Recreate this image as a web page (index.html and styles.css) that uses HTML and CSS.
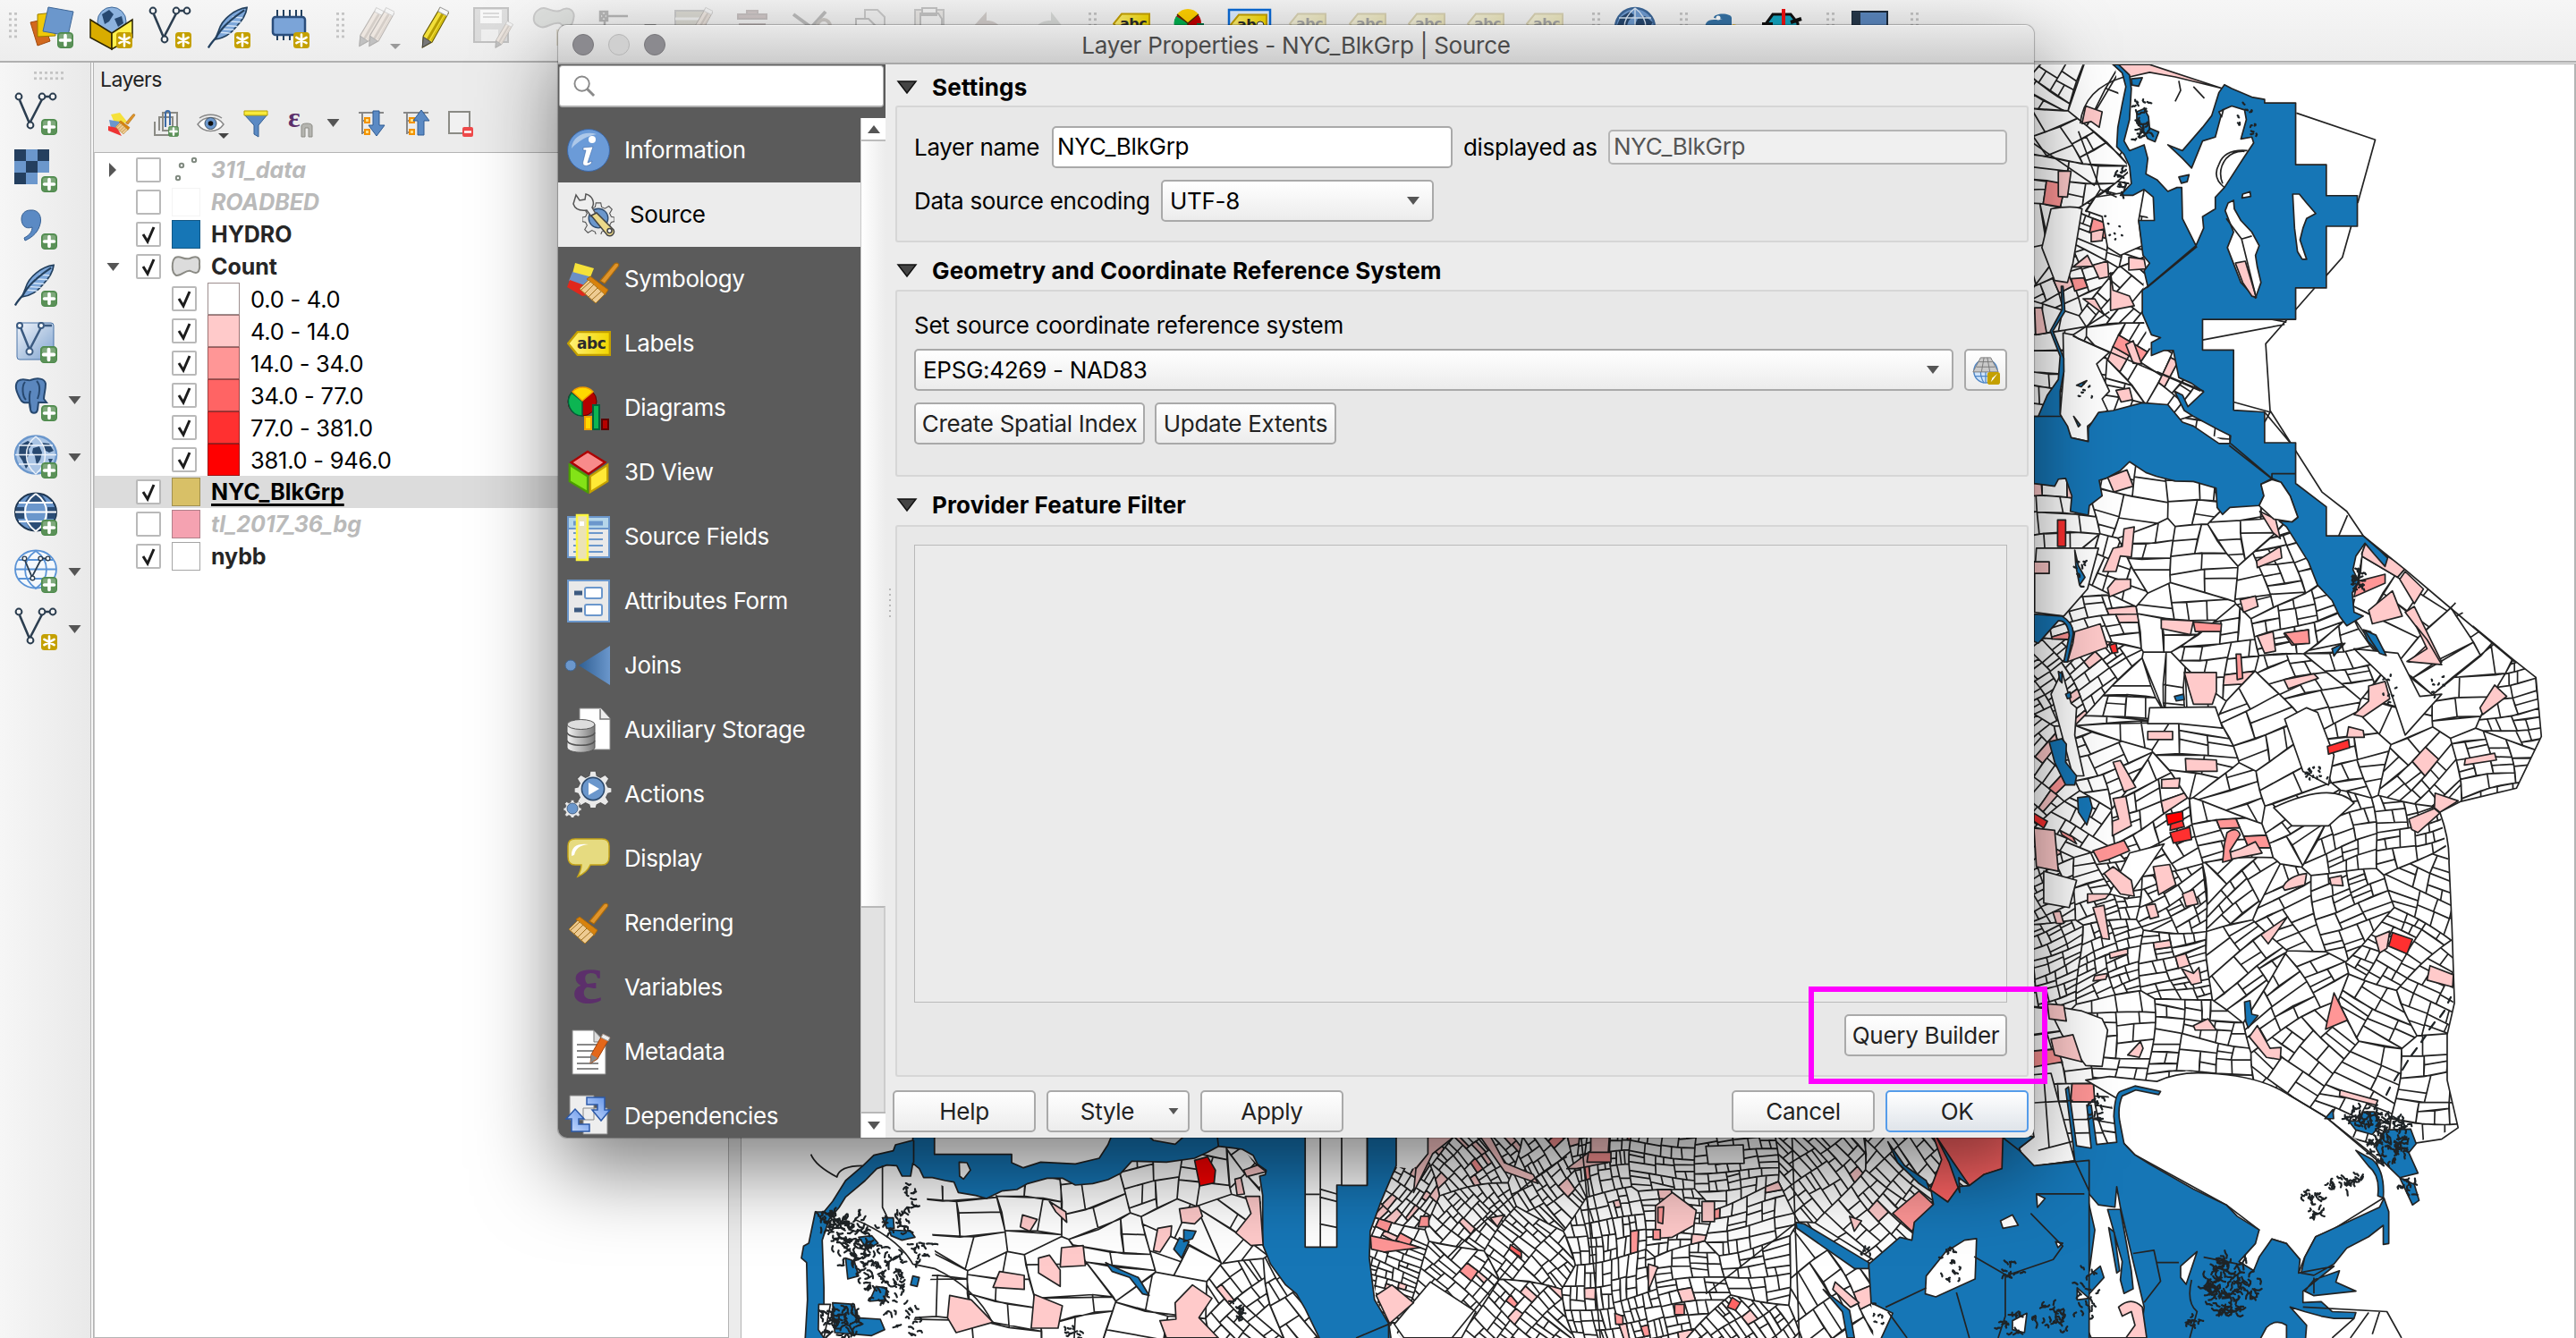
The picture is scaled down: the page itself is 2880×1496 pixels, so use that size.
FILE: index.html
```html
<!DOCTYPE html>
<html lang="en">
<head>
<meta charset="utf-8">
<title>Layer Properties - NYC_BlkGrp | Source</title>
<link rel="stylesheet" href="styles.css">
</head>
<body>
<svg class="defs" width="0" height="0" aria-hidden="true">
  <defs>
    <linearGradient id="gBlue" x1="0" x2="1"><stop offset="0" stop-color="#2f5f93"/><stop offset="1" stop-color="#6b97cc"/></linearGradient>
    <linearGradient id="gMesh" x1="0" y1="0" x2="1" y2="1"><stop offset="0" stop-color="#f0f4fa"/><stop offset="1" stop-color="#7fa3cf"/></linearGradient>
    <linearGradient id="gGrey" x1="0" x2="1"><stop offset="0" stop-color="#f4f4f4"/><stop offset="1" stop-color="#7a7a7a"/></linearGradient>
    <linearGradient id="gYel" x1="0" x2="1"><stop offset="0" stop-color="#fff27a"/><stop offset="1" stop-color="#f2d600"/></linearGradient>
    <linearGradient id="gArr" x1="0" x2="1" y1="1" y2="0"><stop offset="0" stop-color="#cfe0ff"/><stop offset="1" stop-color="#5b8ee6"/></linearGradient>
    <symbol id="plus" viewBox="0 0 18 18"><rect x=".5" y=".5" width="17" height="17" rx="3.5" fill="#5b9158" stroke="#4c8a4b"/><rect x="2" y="2" width="14" height="6" rx="2" fill="#fff" opacity=".22"/><path d="M9 3.5v11M3.500 9h11" stroke="#fff" stroke-width="3.600" stroke-linecap="round"/></symbol>
    <symbol id="star" viewBox="0 0 18 18"><rect width="18" height="18" rx="3.500" fill="#c4a000"/><path d="M9 2.500v13M3.400 5.800l11.200 6.400M14.600 5.800L3.400 12.200" stroke="#fff" stroke-width="2.600" stroke-linecap="round"/></symbol>
    <symbol id="vee" viewBox="0 0 48 48"><path d="M6 9L17 35 31 8M34 5h7" fill="none" stroke="#2c3e50" stroke-width="2.600"/><g fill="#f4f4f4" stroke="#2c3e50" stroke-width="2"><circle cx="5" cy="5" r="3.400"/><circle cx="18" cy="37" r="3.400"/><circle cx="31" cy="5" r="3.400"/><circle cx="43" cy="5" r="3.400"/></g></symbol>
    <symbol id="feather" viewBox="0 0 48 48"><path d="M46 1C32 3 17 14 13 28L9 38C17 37 26 33 33 24 40 17 45 10 46 1z" fill="#7da7da" stroke="#24415f" stroke-width="1.800"/><path d="M15 30l12 1M18 26l13 1M20 22l15 1M24 17l15 1M29 12l12 1" stroke="#d4e4f6" stroke-width="1.500"/><path d="M43 4C28 14 15 26 10 36 5 42 3 44 1 48" fill="none" stroke="#24415f" stroke-width="2.400"/></symbol>
    <symbol id="pencil" viewBox="0 0 32 48"><path d="M22 2l10 5-19 34-11 6 1-13z" fill="#f2df3a" stroke="#6b5c00" stroke-width="1.200"/><path d="M25 9L8 38" stroke="#b69d00" stroke-width="3"/><path d="M28 11L12 39" stroke="#d3bd10" stroke-width="2"/><path d="M22 1l10 5-2 5-10-5z" fill="#f6f6f6" stroke="#999"/><path d="M3 35l9 6-10 6z" fill="#777" stroke="#444"/></symbol>
    <symbol id="tag" viewBox="0 0 42 24"><path d="M10 1h31v22H10L1 12z" fill="url(#gYel)" stroke="#c4a000" stroke-width="2"/></symbol>
    <symbol id="globe" viewBox="0 0 48 48"><circle cx="24" cy="24" r="22" fill="#6f9bd0" stroke="#3d6798" stroke-width="2.500"/><path d="M8 12l10-6 5 4-6 6-3 8 5 5-2 10-6-6-3-9-4-3zM27 14l8-3 9 7-3 4-5 6-3 12-5-3-1-9-5-4z" fill="#27486f"/><path d="M2 24h44M6 13h36M6 35h36M24 2v44M24 2C8 14 8 34 24 46 40 34 40 14 24 2" fill="none" stroke="#d8e6f5" stroke-width="1.400"/></symbol>
    <symbol id="brush" viewBox="0 0 48 48"><path d="M25 22L41 3c3-2 6 0 4 3L30 25z" fill="#e0942a" stroke="#a8690c" stroke-width="1.200"/><path d="M14 17l20 15-4 6L10 20z" fill="#d8820d" stroke="#a8690c"/><path d="M12 21l18 16-10 10L2 31z" fill="#eecb92" stroke="#b07a1e"/><path d="M14 23L4 32M18 26L8 36M22 30L12 40M26 34L16 43" stroke="#a06f1c"/></symbol>
    <symbol id="gear" viewBox="0 0 40 40"><path d="M17 1h6l1 5 4 2 5-3 4 4-3 5 2 4 4 1v5l-4 1-2 4 3 5-4 4-5-3-4 2-1 4h-6l-1-4-4-2-5 3-4-4 3-5-2-4-4-1v-5l4-1 2-4-3-5 4-4 5 3 4-2z" fill="#e9e9e9" stroke="#555" stroke-width="1.200"/><circle cx="20" cy="20" r="12" fill="#6b97cc" stroke="#2d4a6d" stroke-width="1.500"/></symbol>
    <symbol id="down" viewBox="0 0 14 9"><path d="M0 0h14L7 9z" fill="#555"/></symbol>
    <symbol id="tick" viewBox="0 0 28 28"><path d="M8 14l5 8 7-16" fill="none" stroke="#1c1c1c" stroke-width="3"/></symbol>
  </defs>
</svg>

<div class="app">
  <header class="toolbar">
    <span class="grip grip-first"></span>
    <span class="slot"><svg viewBox="0 0 48 48"><path d="M0 18l14-3 8 24-14 5z" fill="#d2691e" stroke="#a14a0e"/><path d="M8 9l18-2 2 26-20 1z" fill="#f0c808" stroke="#9a7f00"/><path d="M20 1l28 5-6 27-28-5z" fill="#6b97cc" stroke="#3f6797"/><use href="#plus" x="30" y="29" width="18" height="18"/></svg></span>
    <span class="slot"><svg viewBox="0 0 48 48"><circle cx="25" cy="17" r="16" fill="#8db3de" stroke="#3d6798"/><path d="M14 9l8-5 5 5-5 8-5 3zM28 14l8-3 2 8-6 4z" fill="#27486f"/><path d="M1 15l24 15v18L1 35z" fill="#d9ac00" stroke="#2b2400" stroke-width="1.500"/><path d="M48 15L25 30v18l23-13z" fill="#fff04d" stroke="#2b2400" stroke-width="1.500"/><use href="#star" x="30" y="29" width="18" height="18"/></svg></span>
    <span class="slot"><svg viewBox="0 0 48 48"><use href="#vee" width="48" height="48"/><use href="#star" x="30" y="29" width="18" height="18"/></svg></span>
    <span class="slot"><svg viewBox="0 0 48 48"><use href="#feather" width="46" height="47"/><use href="#star" x="30" y="29" width="18" height="18"/></svg></span>
    <span class="slot"><svg viewBox="0 0 48 48"><path d="M12 4v34M19 4v34M26 4v34M33 4v34M39 4v34" stroke="#24415f" stroke-width="2"/><rect x="7" y="12" width="36" height="20" rx="3" fill="#7ba4d8" stroke="#2a4d7b" stroke-width="2.500"/><use href="#star" x="30" y="29" width="18" height="18"/></svg></span>
    <span class="grip grip-a"></span>
    <span class="slot slot-62 off"><svg viewBox="0 0 48 48"><g class="sepia"><use href="#pencil" width="30" height="46"/><use href="#pencil" x="11" width="30" height="46"/></g><path d="M36 42h12l-6 6z" fill="#111"/></svg></span>
    <span class="slot"><svg viewBox="0 0 48 48"><use href="#pencil" x="8" width="32" height="47"/></svg></span>
    <span class="slot off"><svg viewBox="0 0 48 48"><path d="M2 2h38v38H2z" fill="#bbb" stroke="#777" stroke-width="2"/><path d="M9 4h24v15H9z" fill="#fff"/><path d="M12 8h18M12 12h18" stroke="#999" stroke-width="1.500"/><path d="M10 26h19v13H10z" fill="#eee"/><use class="sepia" href="#pencil" x="24" y="16" width="22" height="31"/></svg></span>
    <span class="slot off"><svg viewBox="0 0 48 48"><path d="M8 4C16-2 22 8 32 5c10-6 18 0 15 10-2 10-9 9-15 4C22 17 16 27 8 22 0 18 2 8 8 4z" fill="#b9c4b9" stroke="#888" stroke-width="2"/><rect x="28" y="26" width="18" height="18" fill="#c9b77c"/></svg></span>
    <span class="slot slot-91 off"><svg viewBox="0 0 80 48"><path d="M3 6h8v10H3zM3 6l8 10M11 6l-8 10M12 11h22M8 17v14M14 38L30 24l6 6" fill="none" stroke="#555" stroke-width="2.500"/><path d="M52 20h14l-7 7z" fill="#000"/></svg></span>
    <span class="slot off"><svg viewBox="0 0 48 48"><path d="M4 5h34v30H4z" fill="#b9b38f" stroke="#888" stroke-width="2"/><path d="M4 14h34M4 24h34" stroke="#eee" stroke-width="3"/><use class="sepia" href="#pencil" x="20" width="26" height="40"/></svg></span>
    <span class="slot off"><svg viewBox="0 0 48 48"><path d="M8 9h32v5H8zM18 9V5h12v4M10 20h28l-2 26H12z" fill="#b08080" stroke="#8d6b6b" stroke-width="2"/></svg></span>
    <span class="slot off"><svg viewBox="0 0 48 48"><path d="M4 9l26 19M40 6L22 26" stroke="#666" stroke-width="4"/><circle cx="38" cy="22" r="7" fill="none" stroke="#987" stroke-width="4"/></svg></span>
    <span class="slot off"><svg viewBox="0 0 48 48"><path d="M18 4h14l8 8v26H18z" fill="#eee" stroke="#888" stroke-width="2"/><path d="M8 14h14l8 8v24H8z" fill="#fafafa" stroke="#777" stroke-width="2"/></svg></span>
    <span class="slot off"><svg viewBox="0 0 48 48"><path d="M8 4h32v40H8z" fill="#ddd7ca" stroke="#888" stroke-width="2"/><path d="M14 8h20l4 6v26H14zM16 2h16v8H16z" fill="#f6f6f6" stroke="#777" stroke-width="2"/></svg></span>
    <span class="slot off"><svg viewBox="0 0 48 48"><path d="M6 24L22 6v10c14 0 18 10 18 22-5-8-10-10-18-9v8z" fill="#a99286"/></svg></span>
    <span class="slot off"><svg viewBox="0 0 48 48"><path d="M42 24L28 6v10C12 16 8 26 8 38c5-8 10-10 20-9v8z" fill="#aab4aa"/></svg></span>
    <span class="grip grip-b"></span>
    <span class="slot"><svg viewBox="0 0 48 48"><use href="#tag" x="3" y="7" width="42" height="25"/><text class="abc" x="11" y="25">abc</text></svg></span>
    <span class="slot"><svg viewBox="0 0 48 48"><circle cx="21" cy="19" r="15" fill="#c00000"/><path d="M21 19L8 11A15 15 0 0 0 21 34z" fill="#00b050"/><path d="M21 19L9 9a15 15 0 0 1 24 0z" fill="#ffd000"/><path d="M21 34V19L9 9M21 19L33 9" stroke="#4b3000" stroke-width="1.500" fill="none"/><path d="M31 19h8v20h-8z" fill="#00784a"/></svg></span>
    <span class="slot"><svg viewBox="0 0 48 48"><path d="M1 4h46v44H1z" fill="#dcecff" stroke="#0a6ad6" stroke-width="2.500"/><use href="#tag" x="2" y="8" width="42" height="25"/><text class="abc" x="10" y="26">ab</text><circle cx="36" cy="21" r="4" fill="#fff" stroke="#333"/></svg></span>
    <span class="slot off"><svg viewBox="0 0 48 48"><use href="#tag" x="2" y="7" width="42" height="25"/><text class="abc" x="10" y="25">abc</text></svg></span>
    <span class="slot off"><svg viewBox="0 0 48 48"><use href="#tag" x="3" y="7" width="42" height="25"/><text class="abc" x="11" y="25">abc</text></svg></span>
    <span class="slot off"><svg viewBox="0 0 48 48"><use href="#tag" x="3" y="7" width="42" height="25"/><text class="abc" x="11" y="25">abc</text></svg></span>
    <span class="slot off"><svg viewBox="0 0 48 48"><use href="#tag" x="3" y="7" width="42" height="25"/><text class="abc" x="11" y="25">abc</text></svg></span>
    <span class="slot off"><svg viewBox="0 0 48 48"><use href="#tag" x="3" y="7" width="42" height="25"/><text class="abc" x="11" y="25">abc</text></svg></span>
    <span class="grip grip-c"></span>
    <span class="slot"><svg viewBox="0 0 48 48"><use href="#globe" width="48" height="48"/></svg></span>
    <span class="grip grip-d"></span>
    <span class="slot"><svg viewBox="0 0 48 48"><path d="M14 13c0-6 20-6 20 0v14H4c0-8 2-12 10-12h10" fill="#3572a5"/><path d="M35 20c8 0 9 8 8 14H24v-6h11z" fill="#ffd43b"/><circle cx="19" cy="13" r="2.500" fill="#fff"/></svg></span>
    <span class="slot slot-70"><svg viewBox="0 0 48 48"><path d="M6 20L14 9h20l8 10v14H8z" fill="#13a5c0" stroke="#111" stroke-width="3"/><path d="M16 22h20v12H16z" fill="#f4ee22" stroke="#111" stroke-width="2"/><path d="M2 20h12M34 18l12-4" stroke="#111" stroke-width="4"/><path d="M26 3v30" stroke="#e11" stroke-width="4"/></svg></span>
    <span class="grip grip-b"></span>
    <span class="slot"><svg viewBox="0 0 48 48"><path d="M5 6h39v42H5z" fill="#5b87be" stroke="#1c2a3a" stroke-width="2"/><path d="M5 6h9v42H5z" fill="#26384b"/><text class="help-q" x="22" y="40">?</text></svg></span>
    <span class="grip grip-b"></span>
  </header>

  <main class="workspace">
    <nav class="rail">
      <span class="rail-grip"></span>
      <span class="tool"><svg viewBox="0 0 48 48"><use href="#vee" width="48" height="48"/><use href="#plus" x="30" y="30" width="18" height="18"/></svg></span>
      <span class="tool"><svg viewBox="0 0 48 48"><path d="M0 0h39v39H0z" fill="#6b97cc"/><path d="M0 0h13v13H0zM26 0h13v13H26zM13 13h13v13H13zM0 26h13v13H0z" fill="#243f5f"/><path d="M26 26h13v13H26z" fill="#f0f0f0"/><use href="#plus" x="30" y="30" width="18" height="18"/></svg></span>
      <span class="tool"><svg viewBox="0 0 48 48"><path d="M18 4c9-1 13 7 11 15-2 9-8 15-17 19l-1-3c6-3 9-7 9-12C12 26 8 20 8 14 8 8 12 4 18 4z" fill="#5b8ac4" stroke="#355f93"/><use href="#plus" x="30" y="30" width="18" height="18"/></svg></span>
      <span class="tool"><svg viewBox="0 0 48 48"><use href="#feather" width="46" height="47"/><use href="#plus" x="30" y="30" width="18" height="18"/></svg></span>
      <span class="tool"><svg viewBox="0 0 48 48"><rect x="3" y="2" width="41" height="41" rx="3" fill="url(#gMesh)" stroke="#4a74a8"/><path d="M7 7l10 25L30 7M34 5h8" fill="none" stroke="#3b5a80" stroke-width="2.500"/><g fill="#fff" stroke="#3b5a80" stroke-width="2"><circle cx="6" cy="5" r="3"/><circle cx="17" cy="34" r="3.500"/><circle cx="30" cy="5" r="3"/></g><use href="#plus" x="29" y="28" width="19" height="19"/></svg></span>
      <span class="tool"><svg viewBox="0 0 48 48"><path d="M4 3C10-1 14 3 18 2 26-1 34 0 35 6c0 8-2 12-2 17l3 4-9 0-1 8c-1 5-7 5-8 0l-1-8c-6 1-9 0-11-5C2 14 0 8 4 3z" fill="#5b87be" stroke="#27486f" stroke-width="2"/><path d="M12 4c-4 5-3 16 1 20M25 3c5 5 3 15 1 20M18 14c-2 6-1 14 0 20" fill="none" stroke="#27486f" stroke-width="2"/><use href="#plus" x="30" y="30" width="18" height="18"/></svg><svg class="more"><use href="#down"/></svg></span>
      <span class="tool"><svg viewBox="0 0 48 48"><ellipse cx="24" cy="21.500" rx="23" ry="21" fill="#a9c4e4" stroke="#6b97cc" stroke-width="2.500"/><path d="M6 11l9-5 6 3-5 6 1 6-3 4 2 8-3 4-4-9-4-6zM21 14l7-2 3 7-2 8-4 6-2-10-3-4zM31 8l8 1 5 8-5 2-6-3zM38 26l5 0-3 6z" fill="#27486f"/><path d="M1 21.500h46M5 11h38M5 32h38M24 1C10 12 10 31 24 43 38 31 38 12 24 1" fill="none" stroke="#eef4fb" stroke-width="1.500"/><use href="#plus" x="30" y="30" width="18" height="18"/></svg><svg class="more"><use href="#down"/></svg></span>
      <span class="tool"><svg viewBox="0 0 48 48"><ellipse cx="24" cy="21.500" rx="23" ry="21" fill="#6b97cc" stroke="#1f3650" stroke-width="2"/><path d="M17 2h14l5 8H12zM2 16h9v13H2zM37 16h9v13h-9zM12 31h24l-6 10H18z" fill="#2b4d76"/><path d="M13 13h22v17H13z" fill="#6b97cc"/><path d="M1 21.500h46M5 11h38M5 32h38M24 1C8 12 8 31 24 43 40 31 40 12 24 1" fill="none" stroke="#fff" stroke-width="2"/><use href="#plus" x="30" y="30" width="18" height="18"/></svg></span>
      <span class="tool"><svg viewBox="0 0 48 48"><g fill="none" stroke="#5a93d6" stroke-width="1.800"><ellipse cx="24" cy="21.500" rx="23" ry="21" fill="#f4f8fc"/><path d="M1 21.500h46M5 11h38M5 32h38M24 1C8 12 8 31 24 43 40 31 40 12 24 1"/></g><svg x="8" y="6" width="33" height="33"><use href="#vee" width="33" height="33"/></svg><use href="#plus" x="30" y="30" width="18" height="18"/></svg><svg class="more"><use href="#down"/></svg></span>
      <span class="tool"><svg viewBox="0 0 48 48"><use href="#vee" width="48" height="48"/><use href="#star" x="30" y="30" width="18" height="18"/></svg><svg class="more"><use href="#down"/></svg></span>
    </nav>

    <section class="layers">
      <h2 class="layers-title">Layers</h2>
      <div class="layers-tools">
        <svg viewBox="0 0 32 32"><path d="M4 6l10-2 8 10-12 6z" fill="#f5e13a"/><path d="M2 12l12 2 4 8-14 0z" fill="#6b97cc"/><path d="M1 19l10 2 5 9-15-6z" fill="#e33"/><use href="#brush" x="8" y="4" width="24" height="25"/></svg>
        <svg viewBox="0 0 32 32"><path d="M12 4h16v20H12zM8 24V9h15v15M3 14v15h18" fill="none" stroke="#8b8b85" stroke-width="2"/><path d="M15 20V5c0-4 5-4 5 0v13" fill="none" stroke="#3b6aa5" stroke-width="2"/><use href="#plus" x="18" y="19" width="12" height="12"/></svg>
        <svg viewBox="0 0 32 32"><path d="M1 17C8 7 23 7 30 17 23 27 8 27 1 17z" fill="#fff" stroke="#888" stroke-width="1.500"/><path d="M3 10C10 5 21 5 28 10" fill="none" stroke="#888" stroke-width="1.500"/><circle cx="15.500" cy="16" r="6.500" fill="#6b97cc" stroke="#456"/><circle cx="15.500" cy="16" r="2.800" fill="#111"/><path d="M24 27h12l-6 6z" fill="#444"/></svg>
        <svg viewBox="0 0 32 32"><path d="M3 6h26L19 18v13l-5-3V18z" fill="#5b8ac4" stroke="#355f93"/><path d="M3 2h26v5H3z" fill="#f8ea3c" stroke="#b7a200"/></svg>
        <svg viewBox="0 0 32 32"><text class="eps" x="2" y="20">ε</text><path d="M17 31V19q0-3 6-3t6 3v12h-4V21h-4v10z" fill="#b5b5b0" stroke="#8b8b85"/></svg>
        <svg class="mini" viewBox="0 0 14 9"><use href="#down"/></svg>
        <svg viewBox="0 0 32 32"><path d="M2 4h28M6 4v24M6 13h8M6 26h8" stroke="#888" stroke-width="2" fill="none"/><path d="M9 10h5v5H9zM9 23h5v5H9z" fill="#ffe08a" stroke="#f39200" stroke-width="2"/><path d="M18 2h7v16h6l-9 12-9-12h5z" fill="#5b8ac4" stroke="#2f5b93"/></svg>
        <svg viewBox="0 0 32 32"><path d="M2 4h28M6 4v24M6 13h8M6 26h8" stroke="#888" stroke-width="2" fill="none"/><path d="M9 10h5v5H9zM9 23h5v5H9z" fill="#ffe08a" stroke="#f39200" stroke-width="2"/><path d="M18 29h7V13h6L22 1l-9 12h5z" fill="#5b8ac4" stroke="#2f5b93"/></svg>
        <svg viewBox="0 0 32 32"><path d="M3 3h23v24H3z" fill="#f1f1f1" stroke="#8b8b85" stroke-width="2"/><rect x="18" y="20" width="12" height="11" rx="2" fill="#ef4a4a"/><path d="M20 25.500h8" stroke="#fff" stroke-width="2.500"/></svg>
      </div>
      <ul class="tree">
        <li class="row"><span class="fold"><svg width="8" height="16" viewBox="0 0 8 16"><path d="M0 0l8 8-8 8z" fill="#555"/></svg></span><span class="box"></span><span class="swatch"><svg viewBox="0 0 32 32"><g fill="#fff" stroke="#808a80" stroke-width="2"><circle cx="25" cy="5" r="2.200"/><circle cx="11" cy="11" r="2.200"/><circle cx="7" cy="25" r="2.200"/></g></svg></span><span class="name dim">311_data</span></li>
        <li class="row"><span class="fold"></span><span class="box"></span><span class="swatch sw-road"></span><span class="name dim">ROADBED</span></li>
        <li class="row"><span class="fold"></span><span class="box"><svg><use href="#tick"/></svg></span><span class="swatch sw-hydro"></span><span class="name">HYDRO</span></li>
        <li class="row"><span class="fold open"><svg width="15" height="9"><use href="#down"/></svg></span><span class="box"><svg><use href="#tick"/></svg></span><span class="swatch"><svg viewBox="0 0 32 32"><path d="M4 6c6-3 9 3 16 1 8-4 12-1 11 6 1 10-3 12-10 8-5-2-10 6-16 5C-1 23 0 9 4 6z" fill="#dcdcdc" stroke="#8b8b85" stroke-width="2"/></svg></span><span class="name">Count</span></li>
        <li class="row class"><span class="box"><svg><use href="#tick"/></svg></span><span class="ramp r0"></span><span class="label">0.0 - 4.0</span></li>
        <li class="row class"><span class="box"><svg><use href="#tick"/></svg></span><span class="ramp r1"></span><span class="label">4.0 - 14.0</span></li>
        <li class="row class"><span class="box"><svg><use href="#tick"/></svg></span><span class="ramp r2"></span><span class="label">14.0 - 34.0</span></li>
        <li class="row class"><span class="box"><svg><use href="#tick"/></svg></span><span class="ramp r3"></span><span class="label">34.0 - 77.0</span></li>
        <li class="row class"><span class="box"><svg><use href="#tick"/></svg></span><span class="ramp r4"></span><span class="label">77.0 - 381.0</span></li>
        <li class="row class"><span class="box"><svg><use href="#tick"/></svg></span><span class="ramp r5"></span><span class="label">381.0 - 946.0</span></li>
        <li class="row current"><span class="fold"></span><span class="box"><svg><use href="#tick"/></svg></span><span class="swatch sw-blk"></span><span class="name">NYC_BlkGrp</span></li>
        <li class="row"><span class="fold"></span><span class="box"></span><span class="swatch sw-bg"></span><span class="name dim">tl_2017_36_bg</span></li>
        <li class="row"><span class="fold"></span><span class="box"><svg><use href="#tick"/></svg></span><span class="swatch sw-nybb"></span><span class="name">nybb</span></li>
      </ul>
    </section>

    <section class="canvas">
      <svg class="map" viewBox="829 72 2049 1424" preserveAspectRatio="none">
        <defs>
          <clipPath id="land">
            <path transform="translate(2240 60) scale(.4082 .4337)" d="M60 28H305L345 340 400 430 385 560 380 670 400 760 465 765 548 872 500 910 622 985 620 1005 490 950 380 900 232 1000 83 940V1100L345 1052 582 1110 600 1188 713 1150 806 1195 960 1440 985 1243 1100 1330 1210 1418 1400 1568 1400 1700H60z"/>
            <path transform="translate(2240 700) scale(.4082 .5076)" d="M60-60H1230L1285 0 1395 73 1458 113 1473 243 1405 357 1250 387 1195 410 1220 520 1228 660 1232 830 1215 900 1215 1000 1245 1105 1120 1140 1040 1170 780 1032 640 995 500 980 420 1003 270 992 330 1140 195 1178 85 1190 45 1150 60 1100z"/>
            <path transform="translate(800 1240) scale(.4847 .3333)" d="M480 230L560 280 625 300 720 250 800 232 830 255 905 237 960 175 1040 178 1105 165 1160 125 1215 135 1250 185 1270 205 1255 225 1262 455 1280 520 1340 620 1395 768H440L510 520z"/>
            <path transform="translate(1500 1060) scale(.5357 .3333)" d="M180 600V690L150 740 112 735 95 775 60 960 55 1040 75 1190 98 1262 125 1308H1110L1100 1060 1190 980 1235 860 1265 852 1378 740 1380 600z"/>
          </clipPath>
        </defs>
        <g id="blocks" class="line" clip-path="url(#land)"></g>
        <g class="line" transform="translate(2240 60) scale(.4082 .4337)">
          <path class="c1" d="M300 28H400L600 90 470 60 400 48 345 60z"/>
          <path class="nofill" d="M802 153L1018 222 970 385M952 445L928 525 884 572M852 604L718 748 730 920 872 1130 940 1180 985 1243M545 738L770 698M770 685L735 685 775 692M630 898L730 924 715 950M800 1020L715 924M942 1190L918 1243M985 1243L1100 1330 1210 1418 1400 1568"/>
        </g>
        <g class="line" transform="translate(2240 700) scale(.4082 .5076)">
          <path class="nofill" d="M1285 0L1395 73 1458 113 1473 243 1405 357 1250 387 1195 410Q1222 470 1220 520L1228 660 1235 830 1215 900 1215 1000 1245 1105 1200 1130 1120 1140"/>
        </g>

        <g class="line" transform="translate(2240 60) scale(.4082 .4337)">
          <path class="c0" d="M250 370L385 350 370 430 380 495 320 520 285 500 270 420 225 405zM163 720L190 725 205 735 290 770 255 800 290 870 270 890 285 920 230 960 232 1000 185 990 155 930 165 820zM130 400Q190 390 215 400L190 540 175 590 140 585 105 500zM85 1340L90 1275 260 1275 230 1380 165 1450 85 1440z"/>
          <path class="c1" d="M225 135L270 150 262 190 240 175 215 180zM150 303L185 303 175 370 150 368zM190 550L230 520 245 548zM245 545L285 535 288 575 262 580zM293 565L300 610 345 625 358 650 293 662zM343 525L385 530 390 555 343 558zM85 655L105 655 118 720 88 725zM335 750L355 740 378 800 355 798zM308 868L345 862 353 892 322 898zM240 460L275 452 270 482 240 485zM218 632L250 632 275 672zM285 1092L338 1073 355 1115 302 1130zM330 1225L358 1220 350 1298 320 1295 308 1335 272 1335 300 1275 325 1270zM702 1180L745 1200 758 1250 738 1235zM758 1270L762 1300 695 1325 693 1308zM285 1378L305 1355H348V1378L290 1400zM648 1408L690 1398 697 1425 657 1440zM1000 1435L1065 1385 1092 1450 1010 1470zM1085 1355L1100 1335 1150 1380 1125 1418zM1100 1440L1125 1425 1200 1568H1110L1165 1520zM83 1310H125V1340H83zM195 1490L265 1470 285 1530 175 1568 190 1520zM432 1458L520 1462 512 1498 432 1482z"/>
          <path class="c2" d="M185 580L220 578 230 602 195 612zM970 1360L1045 1342V1365L960 1400zM520 1465L597 1470 595 1490 525 1490zM768 1495L835 1485 828 1520 790 1525z"/>
          <path class="c4" d="M148 1202H170V1270H148z"/>
          <path class="water" d="M605 80L625 90 680 112 715 118V127H800V286H884V366H969V445H884V604H800V685H545V764H630V919L715 924V1003H800V1108L884 1168V1243H985L1030 1280 1052 1300 1045 1322 1015 1290 990 1262 965 1295 957 1330 972 1360 955 1390 960 1440 985 1450 940 1475 920 1450 900 1410 860 1370 835 1310 775 1220 755 1205 790 1207 806 1195 785 1140 760 1105 735 1095 705 1110 713 1140 700 1165 620 1170 600 1188 585 1170 582 1120 520 1103 470 1102 420 1090 390 1080 345 1052 320 1075 280 1095 262 1100 270 1140 235 1165 232 1190 205 1185 183 1180 187 1140 170 1095 150 1097 140 1115 83 1108V935H95L120 880 150 840 155 780 128 715 160 660 158 600 163 600 168 665 135 715 165 785 165 820 155 870V930L175 960 185 990 232 1000 232 965 260 925 300 920 380 900 450 905 490 950 520 960 590 1005 620 1005 622 985 590 970 520 935 495 920 468 870 490 880 505 910 548 872 515 850 480 835 465 765 440 765 405 778V745L430 732 405 725 380 670V610L395 600 385 560 400 540 382 520 370 430H413L410 370 385 350 355 365 320 365 350 335 345 290 330 260 310 240 313 190 325 130 335 85 325 50 300 28H315L345 55 350 90 345 170 330 225 345 250 385 235 395 270 390 310 420 325 450 355 475 345 488 345 490 425 527 495 548 450 545 420 580 400V370L605 345 660 265 685 230 680 215 650 220 665 170 660 145 625 135 600 145 580 215 545 225 515 295 490 270 450 235 490 250 545 190 570 160 590 100z"/>
          <path class="water" d="M365 150l20-8 12 20 3 30 25 10-10 25-20-8-15-25-15-15zM350 65l30-3-10 22-18-3zM83 1445L160 1450Q195 1470 190 1500L175 1568H165L180 1500Q175 1460 150 1462L95 1520 83 1515zM195 1280l10 40 18 30-15 20-10-50zM480 318l28-6-5 18-16 4zM200 855l28-12-15 16zM192 935l18 22-5 5zM900 1535l35-15-30 30zM985 1485l20 5 45 60-12 5-40-40z"/>
          <path class="nofill" d="M605 345Q570 320 590 285 605 245 668 250M600 335Q585 300 610 270 630 250 660 252M395 600L527 495M392 604L530 497M622 1005L735 1095M618 1010L737 1098M735 1095V1083H800M83 935H160M80 230L250 340M205 200L265 350 310 370M225 408L265 350M210 180Q220 90 330 60M190 725L290 665M190 728L330 785 540 870M420 820L548 870M480 70l5 25-15 28M520 85l30 30"/>
          <path class="c0" d="M630 378L615 385 607 405 630 460 613 500 650 590 690 630 705 590 695 550 690 520 700 495 680 460 650 430 632 400zM792 362L810 362 830 385 855 412 830 425 820 450 812 480 830 530 818 530 805 510 797 450zM655 362l20-6 2 12-24 4zM735 1098L705 1110 713 1140 700 1165 740 1200 790 1207 806 1195 785 1140 760 1105zM590 150l12-5-5 18z"/>
          <path class="c1" d="M635 540L662 535 692 628 680 625 655 590z"/>
          <path class="nofill" d="M610 425L652 478 692 630M652 478L680 470"/>
        </g>

        <g class="line" transform="translate(2240 700) scale(.4082 .5076)">
          <path class="c0" d="M185 170L200 180 195 240 220 330 190 330 130 150 160 100zM400 180L580 178 600 225 480 215 395 215zM770 205L830 180 860 190 905 285 890 350 820 320zM740 400Q900 340 960 390L890 440 790 440zM120 835L215 848 270 865 285 890 270 970 225 968 160 900zM345 500L440 480 340 600 290 590zM110 540L200 560 180 620 110 610zM960 50L1080 60 1140 155 1200 150 1100 240 1050 120z"/>
          <path class="c1" d="M495 102H583V145L572 172H520L508 140zM498 292L583 295 585 320H500zM395 232H463V250H395zM433 338L483 335 480 357H433zM300 300L320 296 362 355 330 365zM300 380L335 375 350 440 298 462V430L315 425zM768 118L850 105 862 115 780 138zM695 22L738 12 745 55 715 60zM1000 132L1045 122 1058 160 985 200 960 195 1000 165zM945 222L985 230 988 245 940 245zM1305 180L1345 130 1378 155 1312 195zM1265 292L1345 280 1350 295 1262 306zM1182 368L1245 385 1195 410 1180 400zM1110 425L1180 402 1195 412 1135 455 1118 448zM1130 0L1160 30 1200 85 1105 78 1160 50zM410 530L455 525 472 570 425 592zM490 590L520 580 533 612 500 618zM615 500L650 490 690 475 708 500 615 515zM765 575Q780 550 830 545L825 570 770 582zM893 555L925 550 930 572 897 570zM705 680L778 640 725 700zM1018 685L1058 672 1050 710 1030 720zM488 755L520 765 535 752 542 785 515 790zM520 880L560 865 583 890 525 890zM673 905L695 880 730 930 760 928 758 955 720 950zM340 945L375 915 382 930 372 950zM1168 748L1232 768 1230 795 1160 780zM922 1022L1025 1045 1020 1055 920 1035zM245 620L275 615 290 690 270 688zM135 630L155 628 165 655 145 655zM250 770L285 765 280 778 245 782zM290 720L340 710 340 722 292 732zM120 832L165 835 172 870 125 865zM130 910L190 900 215 960 140 945zM83 445L140 450 150 540 90 530zM300 530L350 560 358 595 320 590 275 545zM390 615L415 612 425 640 402 645zM230 590L290 590 280 600 230 610z"/>
          <path class="c2" d="M905 808L942 868 882 888 888 865zM600 520L605 480 612 455Q640 440 648 460L620 495 625 515zM245 495L330 472 345 495 285 515 262 520zM637 62L650 62 655 115 640 118zM770 15L835 8 838 38 795 40zM155 450L190 465 200 480 160 460z"/>
          <path class="c4" d="M887 265L945 250 948 268 890 282zM458 432L488 422 495 442 456 450zM456 455L510 443 515 470 465 478zM1065 675L1120 690 1105 722 1055 705zM290 42L308 38 313 58 298 60zM83 412L120 430 110 445 83 430z"/>
          <path class="c5" d="M445 415L490 408 492 428 450 438z"/>
          <path class="c0" d="M195 1178L83 1190Q50 1175 43 1150L83 1125 60 990 130 985zM330 1140L305 1095 310 1040 225 1000 290 992 420 1003Q480 980 560 985 700 990 780 1032L880 1080 1020 1170 1040 1260 900 1330 855 1345 825 1390 808 1425 775 1360 735 1350 685 1420 645 1400 700 1330 610 1275 360 1165z"/>
          <path class="water" d="M-30 1110L83 1125 43 1150Q50 1175 83 1190L195 1178 190 1140 170 1020 178 1015 200 1145 240 1150 228 1055 240 1055 255 1142 310 1137 302 1080Q305 1030 320 1025L360 1013 430 1025 425 1032 362 1022 325 1035Q312 1060 318 1090L330 1140 360 1165 400 1185 520 1240 610 1275 640 1300 700 1330 690 1360 645 1400 685 1420 700 1390 735 1350 775 1360 812 1395 808 1425 825 1422 905 1410 820 1465 820 1490 870 1488 900 1510 965 1512 960 1525 905 1525 870 1520 825 1510 785 1500 830 1540 825 1590H-30zM825 1390L855 1345 1030 1280 1042 1260 1055 1290V1360L1040 1362V1320L1000 1345 940 1370 905 1405 850 1430 815 1425zM825 1465L850 1440 920 1420 910 1445 965 1465 850 1475z"/>
          <path class="water" d="M125 255L160 248 172 260 170 300 200 330 195 350 170 350 140 300zM203 378L235 375 243 400 228 438 205 410zM660 828L675 825 680 855 697 858 670 885 663 870zM468 155l25-5 2 12-22 3zM900 50l30-12-25 28zM990 10l30 10 28 45-18-5-25-30zM170 150l12-5 3 12-10 3zM150 100l10 5 0 20-6-5zM985 1070h30l15 30-20 20-45-10-20-20h30zM1045 1110L1115 1108 1130 1140 1110 1160 1135 1205 1085 1215 1040 1180 1020 1150zM965 1155L1010 1175Q1045 1200 1040 1260L1025 1255Q1032 1210 1000 1190zM880 1085l22-20 2 20zM1085 1215L1125 1230 1138 1265 1120 1275z"/>
          <path class="c0" d="M225 1242L260 1275 305 1280 310 1235 320 1280 355 1400 385 1500 375 1568 240 1568 190 1475 235 1420 250 1330zM485 1410L530 1378 500 1450 485 1435zM118 1495L155 1510 190 1500 180 1540 140 1568H80L115 1540zM85 1250l30 25-20 12zM10 1530l60-15-10 25-40 10zM0 1305l30-5 5 15-20 5zM720 1545Q745 1525 775 1540L775 1590H690z"/>
          <path class="water" d="M285 1285L320 1285 350 1420 355 1460 330 1470 320 1440 325 1400zM220 1440l45-30 10 25-45 40zM288 1325l15 10 15 85-8 5z"/>
          <path class="c1" d="M315 1500Q350 1475 380 1500L392 1568H335L360 1540 350 1510 325 1520z"/>
          <path class="nofill" d="M195 1178L225 1242M85 1250H225M68 1295L150 1360 140 1395 60 1410M355 1382L412 1375 430 1443 385 1490M418 1402H480M548 1390L640 1405M515 1440Q500 1490 530 1510L510 1568M5 1410V1568M820 1500L1050 1510 1090 1568M1000 1512L950 1568M1030 1510L1010 1560M960 1525L900 1568M850 1435V1470M85 1050L190 1045M95 1155L190 1135M110 990L125 1150M780 1032L880 1080 1020 1175"/>
        </g>

        <g class="line" transform="translate(800 1240) scale(.4847 .3333)">
          <path class="water" d="M455 60V105L415 120 410 140 365 155 340 190 300 240 270 310 250 345 230 345 215 450 203 460 198 500 210 515 212 640 206 790H270L250 768V600L246 440 262 370 285 330 300 295 345 240 372 200 395 188 418 190 430 225 450 225 455 182 470 200 480 230 500 230 530 240 550 245 560 280 600 290 625 300 660 275 695 270 720 250 765 232 800 232 830 255 870 250 905 237 935 215 960 175 1040 178 1105 165 1135 145 1160 125 1190 130 1215 135 1240 155 1250 185 1270 205 1268 220 1255 225 1262 290 1262 455 1280 520 1315 590 1340 620 1360 670 1400 790H1560L1553 720 1520 640 1508 500 1510 410 1535 310 1570 190V60z"/>
          <path class="c0" d="M505 60V152H683V180L710 197 750 178 830 184 885 165 905 120 922 60zM562 178L580 180 588 205 572 235 563 225zM975 60L1010 105 1060 118 1105 60zM1360 60V463H1433V255H1503V60zM238 655H265L250 768 237 740z"/>
          <path class="nofill" d="M1395 60V463M1360 286H1393M1393 268L1433 285M1393 295L1433 310M1393 385L1433 397M457 105V180M1160 125L1155 60M220 152Q230 190 280 228 285 190 340 190M320 370Q420 430 455 520L505 535Q600 600 640 720M385 190V330L395 360"/>
          <path class="c5" d="M1105 172L1135 160 1153 205 1150 248 1117 258z"/>
          <path class="c1" d="M1218 205L1250 188 1270 210 1225 227zM1198 235L1212 230 1220 285 1203 288zM1222 293H1255L1263 455 1235 458 1200 415 1235 350zM1070 335L1115 325 1123 360 1105 385 1075 380zM770 310L808 345 810 380 785 345zM708 355L742 370 725 410 703 395zM798 465L848 458 853 525 795 530zM1020 400L1052 392 1050 425 1025 480 1010 475zM745 500L770 490 795 540 795 595 745 550zM655 545L712 558V605L640 598zM735 622L800 660 790 735 728 735zM540 625L590 640 640 715 555 750 535 700zM1060 650L1100 590 1145 635 1115 700 1160 768H1040L1025 710 1062 705z"/>
          <path class="water" d="M1080 405L1108 410 1100 435 1080 445zM1070 432L1092 445 1075 500 1057 470zM900 515L935 540 975 565 1000 625 985 620 955 565 915 545zM385 365L410 365 412 400 395 400zM400 405L450 410 460 430 430 440 405 425zM300 500L320 510 330 560 305 570zM330 430L360 425 375 450 350 470zM370 595L395 600 390 640 355 645zM455 560L470 565 465 595 450 590zM270 650L320 655 325 700 380 705 390 740 360 760 275 750z"/>
        </g>

        <g class="line" transform="translate(1500 1060) scale(.5357 .3333)">
          <path class="c0" d="M760 665L838 660 840 722 765 725zM110 1262L185 1120 280 1220 250 1308H130zM0 600H53V796H0z"/>
          <path class="c1" d="M180 600H260L190 690 150 820 155 740 180 690zM655 865L690 820 740 880 735 930 690 970 655 975zM275 600H300L340 720 400 760 410 790 340 750zM1060 900L1085 915 1070 950zM1030 1120L1080 1190 1062 1205 1025 1145zM72 1165L105 1130 150 1190 100 1260zM640 1060L660 1070 640 1150zM520 600H560L555 720 490 740 470 740 520 680zM752 850H778V918H752zM310 905L340 895 325 935z"/>
          <path class="c2" d="M60 965L120 985 165 1005 90 1020 62 1010zM165 900H182V935H160zM1150 890L1205 815 1235 860 1190 950zM515 685H562V718H512zM660 870L672 868 670 925 660 920zM695 1195H715V1230H695zM570 1225L587 1235V1262H572zM650 945H665V978H650z"/>
          <path class="c3" d="M1228 600H1382V740L1340 760 1310 797 1275 720 1290 800 1265 852 1228 812 1252 710zM352 995L375 1020V1040L350 1010zM815 1172L832 1190 822 1215 805 1205z"/>
          <path class="water" d="M948 920L965 925 1100 1055 1100 1075 1070 1075 950 940zM1240 630L1275 715 1310 797 1288 770 1290 820 1268 720zM1140 650L1175 730 1220 780 1228 815 1205 790 1160 720zM1380 636L1415 680 1445 730 1560 712V1330H1120L1150 1225 1105 1190 1100 1060 1165 970 1190 980 1195 920 1235 860 1230 812 1265 852 1288 800 1310 797 1340 760 1378 740zM1005 1145L1060 1215 1070 1308 1055 1308 1045 1220z"/>
          <path class="c0" d="M1325 975L1322 1110 1240 1170 1218 1160 1220 1100 1260 1020 1300 980zM1375 915L1400 895 1412 930 1380 940zM1450 825L1468 840 1452 870zM1400 1250L1430 1225 1425 1290 1400 1280zM1490 985L1505 990 1495 1005zM1535 1140L1560 1175 1535 1180z"/>
          <path class="nofill" d="M1450 825H1550M1438 890L1505 1000 1485 1045 1388 1098 1320 1035M1385 1098V1235L1370 1308M1135 1205L1220 1140M1140 1220L1180 1308M1283 1155L1310 1308M1530 712L1560 815M940 636L955 1308M98 1262L30 1308M98 1262V1308M500 636L540 1308M370 1030L230 1308M470 700Q380 780 220 1040M950 920L760 1160"/>
        </g>
        <g id="marsh" class="marsh"></g>
      </svg>
    </section>
  </main>

  <div class="dialog">
    <div class="titlebar"><span class="lights"><i></i><i class="hollow"></i><i></i></span><span class="title">Layer Properties - NYC_BlkGrp | Source</span></div>
    <div class="dialog-body">
      <aside class="side">
        <div class="search"><svg viewBox="0 0 26 26"><circle cx="10" cy="10" r="8.500" fill="none" stroke="#8a8a8a" stroke-width="2"/><path d="M16 16l8 8" stroke="#8a8a8a" stroke-width="3"/></svg></div>
        <div class="side-main">
          <ul class="pages">
            <li><svg viewBox="0 0 48 48"><circle cx="24" cy="24" r="23.500" fill="#6b9bd8" stroke="#3c68a8"/><path d="M5 22C6 8 20 2 33 6 22 8 12 14 5 22z" fill="#fff" opacity=".45"/><circle cx="28" cy="12" r="4" fill="#fff"/><path d="M18 21l11-1-6 18 5-2-1 3c-5 4-11 3-9-3l3-12h-3z" fill="#fff" stroke="#3c68a8" stroke-width=".6"/></svg>Information</li>
            <li class="active"><svg viewBox="0 0 48 48"><use href="#gear" x="11" y="10" width="36" height="36"/><path d="M1 12l3-10 4 6 6-1L15 1c8 2 10 10 7 15l4 7-5 3-5-7c-7 1-13-1-15-7z" fill="#eee" stroke="#555" stroke-width="1.500"/><path d="M21 25l6-3 19 19c2 5-3 8-7 6z" fill="#ecd98a" stroke="#444" stroke-width="1.500"/><circle cx="41.500" cy="42" r="2.500" fill="#fff" stroke="#444" stroke-width="1.500"/></svg>Source</li>
            <li><svg viewBox="0 0 48 48"><path d="M9 6l21 6-4 10-20-4z" fill="#f5e13a"/><path d="M6 16l22 6-6 12-20-8z" fill="#6b8fc4"/><path d="M3 25l22 8 2 8-10 2L0 33z" fill="#e0281c"/><svg x="12" y="4" width="38" height="40" viewBox="0 0 48 48"><use href="#brush"/></svg></svg>Symbology</li>
            <li><svg viewBox="0 0 48 48"><use href="#tag" y="10" width="49" height="28"/><text class="abc big" x="11" y="30">abc</text></svg>Labels</li>
            <li><svg viewBox="0 0 48 48"><circle cx="17" cy="17" r="16" fill="#b50000" stroke="#5b0000"/><path d="M17 17L5 7A16 16 0 0 0 17 33z" fill="#0cb552" stroke="#00603c" stroke-width="1.500"/><path d="M17 16L6 6a16 16 0 0 1 23 0z" fill="#ffd800" stroke="#f0a000" stroke-width="1.500"/><path d="M20 34h7v14h-7z" fill="#ffd800" stroke="#f0a000" stroke-width="2"/><path d="M29 21h7v27h-7z" fill="#0cb552" stroke="#00603c" stroke-width="2"/><path d="M39 37h7v11h-7z" fill="#b50000" stroke="#5b0000" stroke-width="2"/></svg>Diagrams</li>
            <li><svg viewBox="0 0 48 52"><path d="M23 1l21 13-20 14L3 14z" fill="#f88b8b" stroke="#ad0000" stroke-width="2.500"/><path d="M1 17l22 14v19L1 37z" fill="#83e317" stroke="#4b9e00" stroke-width="2.500"/><path d="M47 17L26 31v19l21-13z" fill="#ffe936" stroke="#c4a000" stroke-width="2.500"/></svg>3D View</li>
            <li><svg viewBox="0 0 48 48"><path d="M1 2h46v45H1z" fill="#e9e9e9" stroke="#6b97cc" stroke-width="2"/><path d="M2 3h44v11H2z" fill="#b5d6ea"/><path d="M7 9h33" stroke="#6b97cc" stroke-width="5"/><path d="M2 15h44M7 20h33M7 27h33M7 34h33M7 41h33" stroke="#6b97cc" stroke-width="2"/><path d="M11 0h12v50H11z" fill="#ece3b4" stroke="#fdf63e" stroke-width="2.500"/><path d="M14 7h5v5h-5z" fill="#fff"/></svg>Source Fields</li>
            <li><svg viewBox="0 0 48 48"><path d="M1 1h46v46H1z" fill="#e9e9e9" stroke="#6b97cc" stroke-width="2"/><path d="M8 15h9M8 34h9" stroke="#3d5a80" stroke-width="5"/><rect x="20" y="9" width="19" height="12" rx="2" fill="#fff" stroke="#6b97cc" stroke-width="2"/><rect x="20" y="28" width="19" height="12" rx="2" fill="#fff" stroke="#6b97cc" stroke-width="2"/></svg>Attributes Form</li>
            <li><svg viewBox="0 0 48 48"><circle cx="4" cy="24" r="6" fill="#6b97cc" stroke="#3f6797"/><path d="M13 24L48 2v44z" fill="url(#gBlue)"/></svg>Joins</li>
            <li><svg viewBox="0 0 48 48"><path d="M14 0h24l10 11v35H14z" fill="#fff" stroke="#888"/><path d="M37 1v11h11" fill="#eee" stroke="#777" stroke-width="1.500"/><path d="M0 18v26c2 7 29 7 31 0V18z" fill="url(#gGrey)" stroke="#555"/><ellipse cx="15.500" cy="18" rx="15.500" ry="5.500" fill="#ddd" stroke="#555"/><path d="M0 27c2 7 29 7 31 0M0 36c2 7 29 7 31 0" fill="none" stroke="#555" stroke-width="1.500"/></svg>Auxiliary Storage</li>
            <li><svg viewBox="0 0 48 48"><use href="#gear" x="8" y="-3" width="42" height="42"/><path d="M24 11l12 7-12 7z" fill="#fff"/><use href="#gear" x="-4" y="30" width="20" height="20"/></svg>Actions</li>
            <li><svg viewBox="0 0 48 48"><path d="M9 2h30q8 0 8 8v12q0 9-8 9H26q-4 9-14 13 4-8 4-13H9q-8 0-8-9V10q0-8 8-8z" fill="#e6db80" stroke="#c4a41a" stroke-width="1.500"/><path d="M5 21Q4 6 24 8 10 9 8 20z" fill="#fff"/></svg>Display</li>
            <li><svg viewBox="0 0 48 48"><use href="#brush" width="48" height="48"/></svg>Rendering</li>
            <li><svg viewBox="0 0 48 48"><text class="eps eps-big" x="6" y="41">ε</text></svg>Variables</li>
            <li><svg viewBox="0 0 48 48"><path d="M6 0h24l13 13v36H6z" fill="#fff" stroke="#888"/><path d="M30 0v13h12z" fill="#ddd" stroke="#777"/><path d="M11 16h23M11 23h21M11 30h17M11 37h24M11 43h24" stroke="#888" stroke-width="2"/><path d="M40 4l8 4-14 24-8 5 1-10z" fill="#e4671a" stroke="#9d430c"/><path d="M40 4l8 4-2 4-8-4z" fill="#eee" stroke="#999"/><path d="M27 27l7 4-8 6z" fill="#888"/></svg>Metadata</li>
            <li><svg viewBox="0 0 48 48"><path d="M3 1h27v27H3zM18 15h27v29H18z" fill="#eee" stroke="#888"/><path d="M22 3h20v14h6L38 29 28 17h6v-6H22z" fill="url(#gArr)" stroke="#2c59a8" stroke-width="1.500"/><path d="M25 41H5V27H-1L9 16l10 11h-6v6h12z" fill="url(#gArr)" stroke="#2c59a8" stroke-width="1.500"/></svg>Dependencies</li>
          </ul>
          <div class="scroll"><span class="arrow"><svg width="16" height="9" viewBox="0 0 14 9"><path d="M0 9h14L7 0z" fill="#555"/></svg></span><span class="thumb"></span><span class="groove"></span><span class="arrow last"><svg width="16" height="9"><use href="#down"/></svg></span></div>
        </div>
      </aside>
      <div class="split"></div>
      <div class="content">
        <h3 class="head head-1"><svg viewBox="0 0 22 15"><path d="M1 1h20L11 14z" fill="#444" stroke="#111" stroke-width="1.500"/></svg>Settings</h3>
        <div class="group g-settings">
          <div class="line-row"><label class="lbl-name">Layer name</label><span class="field">NYC_BlkGrp</span><label class="lbl-shown">displayed as</label><span class="field disabled">NYC_BlkGrp</span></div>
          <div class="line-row"><label class="lbl-enc">Data source encoding</label><span class="combo enc">UTF-8<svg><use href="#down"/></svg></span></div>
        </div>
        <h3 class="head head-2"><svg viewBox="0 0 22 15"><path d="M1 1h20L11 14z" fill="#444" stroke="#111" stroke-width="1.500"/></svg>Geometry and Coordinate Reference System</h3>
        <div class="group g-crs">
          <label class="crs-label">Set source coordinate reference system</label>
          <div class="line-row"><span class="combo crs">EPSG:4269 - NAD83<svg><use href="#down"/></svg></span><button class="btn crs-btn"><svg viewBox="0 0 34 34"><circle cx="17" cy="18" r="14" fill="#cfe4fa" stroke="#4f86c6" stroke-width="1.500"/><path d="M17 18v14M4 24h26M11 18q0 8 4 14M23 18q0 8-4 14" fill="none" stroke="#4f86c6" stroke-width="1.300"/><path d="M11 2h12l9 17H2z" fill="#c9c9c9" stroke="#777"/><path d="M9 7h16M6 13h22M15 2l-3 17M19 2l3 17" stroke="#777"/><rect x="19" y="19" width="15" height="15" rx="3" fill="#c4a000"/><path d="M23 31l2-5 6-5-5 7z" fill="#fff"/></svg></button></div>
          <div class="line-row btn-row"><button class="btn b-index">Create Spatial Index</button><button class="btn b-ext">Update Extents</button></div>
        </div>
        <h3 class="head head-3"><svg viewBox="0 0 22 15"><path d="M1 1h20L11 14z" fill="#444" stroke="#111" stroke-width="1.500"/></svg>Provider Feature Filter</h3>
        <div class="group g-filter"><div class="filter-text"></div><button class="btn b-query">Query Builder</button></div>
        <footer class="actions"><button class="btn">Help</button><button class="btn b-style">Style<svg><use href="#down"/></svg></button><button class="btn">Apply</button><span class="spring"></span><button class="btn">Cancel</button><button class="btn primary">OK</button></footer>
      </div>
    </div>
  </div>
  <div class="callout"></div>
</div>
<script src="map.js"></script>
</body>
</html>
```
FILE: styles.css
```css
* { box-sizing: border-box; }
body { margin: 0; font-family: Inter, "Liberation Sans", sans-serif; font-size: 26px; letter-spacing: -0.3px; color: #000; background: #ececec; }
ul { list-style: none; margin: 0; padding: 0; }
h2, h3 { margin: 0; font-size: inherit; }
svg { display: block; flex: none; overflow: visible; }
.defs { position: absolute; }
.app { width: 2880px; height: 1496px; overflow: hidden; display: flex; flex-direction: column; position: relative; }

.toolbar { height: 70px; flex: none; display: flex; background: linear-gradient(#f6f6f6, #ededed); border-bottom: 2px solid #b0b0b0; }
.slot { width: 66px; padding: 7px 0 0 9px; flex: none; }
.slot svg { width: 48px; height: 48px; }
.slot-62 { width: 62px; }
.slot-70 { width: 70px; }
.slot-91 { width: 91px; padding-left: 17px; }
.slot-91 svg { width: 80px; }
.off { opacity: .38; filter: saturate(.5); }
.sepia { filter: saturate(.3) hue-rotate(-30deg); }
.grip { flex: none; height: 32px; margin-top: 14px; background: linear-gradient(90deg, #c4c4c4 3px, transparent 3px 6px, #c4c4c4 6px 9px, transparent 9px) right 0 top 0 / 15px 100% no-repeat; -webkit-mask: linear-gradient(#000 3px, transparent 3px) 0 0 / 100% 6.4px; mask: linear-gradient(#000 3px, transparent 3px) 0 0 / 100% 6.4px; }
.grip-first { width: 25px; }
.grip-a { width: 36px; }
.grip-b { width: 28px; }
.grip-c { width: 35px; }
.grip-d { width: 32px; }
.abc { font: bold 16px "DejaVu Sans", sans-serif; letter-spacing: -.5px; fill: #2b2b2b; }
.abc.big { font-size: 17px; }
.help-q { font: bold 30px "Liberation Serif", serif; fill: #fff; }
.eps { font: bold 32px "Liberation Serif", serif; fill: #5c2f6b; }
.eps-big { font-size: 78px; font-weight: 700; }

.workspace { flex: 1; display: flex; min-height: 0; }
.rail { width: 105px; flex: none; background: linear-gradient(90deg, #f6f6f6, #e9e9e9); border-right: 4px double #b4b4b4; padding-left: 16px; }
.rail-grip { display: block; width: 33px; height: 10px; margin: 10px 0 5px 22px; background: linear-gradient(90deg, #c4c4c4 3px, transparent 3px) 0 0 / 6px 100%; -webkit-mask: linear-gradient(#000 3px, transparent 3px) 0 0 / 100% 6.4px; mask: linear-gradient(#000 3px, transparent 3px) 0 0 / 100% 6.4px; }
.tool { display: flex; align-items: center; height: 64px; gap: 12px; }
.tool > svg { width: 48px; height: 48px; }
.tool > svg.more { width: 15px; height: 9px; }

.layers { width: 710px; flex: none; display: flex; flex-direction: column; }
.layers-title { font-weight: 400; font-size: 23px; letter-spacing: -.6px; line-height: 38px; padding-left: 7px; color: #222; }
.layers-tools { display: flex; align-items: center; height: 62px; padding: 0 0 3px 15px; gap: 18px; }
.layers-tools svg { width: 32px; height: 32px; }
.layers-tools svg.mini { width: 15px; height: 9px; margin: 0 1px 0 -5px; }
.tree { flex: 1; background: #fff; border: 1px solid #b4b4b4; border-left-color: #c8c8c8; padding-top: 1px; }
.row { display: flex; align-items: center; height: 36px; padding-left: 13px; }
.fold { width: 33px; padding-left: 3px; }
.fold.open { padding-left: 0; }
.box { width: 28px; height: 28px; border: 2px solid #b9b9b9; border-radius: 2px; margin-right: 12px; background: #fff; flex: none; }
.box svg { width: 28px; height: 28px; margin: -2px; }
.swatch { width: 32px; height: 32px; margin-right: 12px; flex: none; }
.swatch svg { width: 32px; height: 32px; }
.sw-road { border: 1px solid #f4f4f4; }
.sw-hydro { background: #1676b6; border: 1px solid #115785; }
.sw-blk { background: #d8c067; border: 1px solid #a09050; }
.sw-bg { background: #f5a2b1; border: 1px solid #b0808a; }
.sw-nybb { background: #fff; border: 1px solid #a5a5a5; }
.name { font-weight: 700; color: #262626; font-size: 25px; letter-spacing: -.05px; }
.dim { color: #bababa; font-style: italic; }
.class { padding-left: 86px; }
.ramp { width: 36px; height: 36px; margin-right: 12px; border: 1px solid rgba(60, 30, 30, .5); }
.label { font-size: 25.5px; letter-spacing: -.25px; }
.r0 { background: #fff; }
.r1 { background: #ffcaca; }
.r2 { background: #ff9696; }
.r3 { background: #ff6464; }
.r4 { background: #ff3030; }
.r5 { background: #f00; }
.current { background: #dcdcdc; }
.current .name { color: #000; text-decoration: underline; text-decoration-thickness: 3px; text-underline-offset: 4px; text-decoration-skip-ink: none; }

.canvas { flex: 1; margin-left: 13px; margin-top: 1px; background: #fff; border: 1px solid #b4b4b4; border-right-width: 2px; border-bottom: 0; overflow: hidden; }
.map { width: 100%; height: 100%; }
.line path { stroke: #232323; stroke-width: 1.7px; vector-effect: non-scaling-stroke; stroke-linejoin: round; }
.line .nofill { fill: none; }
.line .water { fill: #1676b6; }
.line .c0 { fill: #fff; }
.line .c1 { fill: #ffcaca; }
.line .c2 { fill: #ff9696; }
.line .c3 { fill: #ff6464; }
.line .c4 { fill: #ff3030; }
.line .c5 { fill: #f00; }
.marsh path { fill: none; stroke: #1e2326; stroke-width: 2.2px; stroke-linecap: round; }

.dialog { position: absolute; left: 624px; top: 28px; width: 1650px; height: 1244px; border-radius: 10px; background: #ececec; box-shadow: 0 0 1px 1px rgba(0, 0, 0, .25), 0 36px 90px rgba(0, 0, 0, .5); display: flex; flex-direction: column; overflow: hidden; }
.titlebar { height: 44px; flex: none; background: linear-gradient(#e8e8e8, #cdcdcd); border-bottom: 2px solid #a8a8a8; border-top: 1px solid #f6f6f6; display: grid; place-items: center; grid-template-areas: "all"; }
.titlebar > * { grid-area: all; }
.title { color: #4a4a4a; padding-top: 2px; letter-spacing: -.25px; }
.lights { justify-self: start; display: flex; gap: 16px; padding-left: 16px; }
.lights i { width: 24px; height: 24px; border-radius: 50%; background: #8b8a8f; border: 1px solid #77767a; }
.lights .hollow { background: #d0d0d0; border-color: #b5b5b5; }
.dialog-body { flex: 1; display: flex; min-height: 0; }
.side { width: 366px; flex: none; background: #5b5b5b; display: flex; flex-direction: column; }
.search { height: 47px; margin: 1px 2px 0 1px; background: #fff; border: 1px solid #b0b0b0; border-bottom-width: 2px; border-radius: 4px; padding: 10px 15px; }
.search svg { width: 25px; height: 25px; }
.side-main { flex: 1; display: flex; min-height: 0; }
.pages { width: 338px; padding-top: 12px; overflow: hidden; color: #fff; letter-spacing: -.4px; }
.pages li { height: 72px; display: flex; align-items: center; padding: 0 0 1px 10px; gap: 16px; }
.pages svg { width: 48px; height: 48px; }
.pages .active { background: #ececec; color: #000; padding-left: 16px; }
.scroll { width: 28px; margin-top: 12px; display: flex; flex-direction: column; background: #fafafa; border-left: 1px solid #c8c8c8; }
.arrow { height: 26px; display: grid; place-items: center; border-bottom: 2px solid #bcbcbc; background: #fff; }
.thumb { height: 855px; background: linear-gradient(90deg, #fff, #ececec); }
.groove { flex: 1; background: #e2e2e2; border-top: 2px solid #b8b8b8; border-right: 2px solid #ccc; }
.arrow.last { height: 29px; border-bottom: 0; border-top: 2px solid #b8b8b8; }
.split { width: 11px; flex: none; background: linear-gradient(#b8b8b8 2px, transparent 2px) 4px 586px / 2px 6px; background-repeat: no-repeat repeat; -webkit-mask: linear-gradient(#000, #000) 0 584px / 100% 36px no-repeat; mask: linear-gradient(#000, #000) 0 584px / 100% 36px no-repeat; }
.content { flex: 1; display: flex; flex-direction: column; padding-right: 6px; }
.head { display: flex; align-items: center; gap: 17px; padding-left: 2px; font-weight: 700; font-size: 26px; letter-spacing: .12px; flex: none; }
.head svg { width: 22px; height: 15px; }
.head-1 { height: 46px; padding-top: 4px; letter-spacing: .2px; }
.head-2 { height: 53px; padding-top: 10px; }
.head-3 { height: 54px; padding-top: 9px; }
.group { flex: none; background: #e8e8e8; border: 2px solid #d6d6d6; border-radius: 3px; padding: 21px 22px 0 19px; display: flex; flex-direction: column; }
.g-settings { height: 153px; gap: 13px; }
.g-crs { height: 209px; }
.g-filter { height: 617px; padding-top: 20px; }
.line-row { display: flex; align-items: center; height: 47px; }
.lbl-name { width: 154px; }
.lbl-shown { width: 174px; padding-left: 12px; }
.lbl-enc { width: 276px; }
.field { width: 448px; height: 47px; line-height: 42px; background: #fff; border: 2px solid #a9a9a9; border-radius: 5px; padding-left: 4px; }
.field.disabled { width: 446px; height: 39px; line-height: 34px; background: #f0f0f0; color: #555; border-color: #b5b5b5; }
.combo { height: 47px; display: flex; align-items: center; justify-content: space-between; background: linear-gradient(#fff, #ececec); border: 2px solid #a9a9a9; border-radius: 5px; padding: 0 13px 0 8px; letter-spacing: -.3px; }
.combo svg { width: 16px; height: 9px; }
.enc { width: 305px; }
.crs { width: 1162px; margin-right: 12px; }
.crs-label { line-height: 34px; margin-bottom: 9px; }
.btn { height: 47px; padding: 0; font: inherit; letter-spacing: inherit; color: #222; background: linear-gradient(#fff, #ececec); border: 2px solid #a9a9a9; border-radius: 5px; display: flex; align-items: center; justify-content: center; width: 160px; white-space: nowrap; }
.crs-btn { width: 48px; }
.crs-btn svg { width: 32px; height: 32px; }
.btn-row { margin-top: 13px; gap: 11px; }
.b-index { width: 258px; }
.b-ext { width: 203px; }
.filter-text { height: 512px; border: 1px solid #b9b9b9; background: #ebebeb; }
.b-query { width: 182px; align-self: flex-end; margin-top: 13px; }
.actions { display: flex; gap: 12px; margin: 15px 0 0 -3px; }
.spring { flex: 1; }
.b-style { gap: 38px; padding-left: 26px; }
.b-style svg { width: 12px; height: 7px; }
.primary { border-color: #559cea; background: linear-gradient(#fff, #dfe4ea); }
.callout { position: absolute; left: 2022px; top: 1103px; width: 267px; height: 109px; border: 6px solid #f0f; }
```
FILE: map.js
```js
// Block groups: each neighbourhood is a Voronoi cell around [x, y, street angle, block area, share of shaded blocks].
const hoods = [
  [2300,90,30,300,.05],[2300,150,-25,350,.04],[2295,205,2,420,.05],[2345,105,-60,900,0],[2290,260,80,700,0],[2345,270,15,180,.08],
  [2330,300,-20,200,.1],[2375,330,-55,260,.05],[2290,400,2,450,.04],[2385,395,-60,350,.04],[2340,430,15,260,.04],
  [2300,570,2,380,.04],[2380,560,15,500,0],[2460,560,4,420,0],[2400,620,2,380,0],[2370,640,-78,380,.03],[2460,620,3,330,0],[2500,590,-8,500,0],
  [2430,690,2,380,0],[2350,690,-10,200,.14],[2550,640,-15,300,.01],[2460,735,2,250,.02],[2580,690,-15,320,.01],[2680,700,32,900,.03],[2720,740,-30,1100,0],
  [2340,750,-35,120,.08],[2620,735,-12,260,.01],[2380,790,5,400,.02],[2440,760,88,500,0],[2460,850,2,350,.02],[2530,820,-18,330,.01],[2590,770,-20,330,.02],
  [2680,790,20,900,.02],[2760,780,-10,500,0],[2805,800,-12,200,.01],[2790,850,-10,220,.02],[2350,860,-18,330,.04],[2400,900,-18,420,.01],[2500,890,-20,500,0],
  [2560,870,-20,1400,0],[2640,840,-18,330,.01],[2700,860,-38,240,.01],[2285,880,-50,150,.12],[2320,920,22,220,.15],[2420,935,-22,240,.1],[2490,925,-12,280,.04],
  [2570,910,-30,300,0],[2620,940,-14,190,0],[2690,930,-15,190,0],[2725,990,18,230,0],[2290,990,-20,110,.05],[2350,995,-18,130,.04],[2430,1010,-28,150,0],
  [2500,1000,-42,240,0],[2560,1020,-30,330,0],[2620,1010,-14,180,0],[2680,1075,28,150,0],[2290,1070,-20,110,.02],[2360,1070,-20,120,.02],[2430,1070,-16,140,.01],
  [2510,1070,-30,280,0],[2570,1110,-32,330,0],[2660,1130,30,240,0],[2715,1110,28,240,0],[2370,1160,5,260,0],[2440,1165,3,240,0],[2600,1160,42,330,.01],
  [2650,1200,18,380,.02],[2710,1205,2,400,0],[2290,1180,-10,700,.05],
  [1550,1400,18,130,.12],[1560,1330,-55,120,.2],[1640,1300,48,120,.16],[1650,1360,46,130,.04],[1630,1430,44,160,.05],[1700,1400,42,130,.03],[1690,1470,40,170,.03],
  [1740,1320,52,160,.05],[1790,1300,85,110,.18],[1800,1370,86,120,.08],[1810,1440,84,130,.06],[1860,1300,2,150,.04],[1870,1360,-5,170,.07],[1930,1310,-2,150,.03],
  [1950,1370,-6,230,.03],[1900,1430,-6,160,.05],[1960,1420,-4,200,0],[1950,1480,50,150,.04],[2040,1310,48,210,.01],[2090,1350,48,250,.02],[2040,1430,55,700,.03],
  [2130,1300,45,260,.04],
  [1085,1370,2,900,0],[1150,1350,5,800,0],[1220,1340,-20,600,0],[1290,1310,-6,500,0],[1350,1310,4,420,0],[1400,1300,50,380,0],[1120,1450,8,900,0],[1190,1440,-4,1100,0],
  [1250,1400,3,800,0],[1320,1390,30,900,0],[1380,1370,35,600,0],[1400,1450,48,200,.02],[1440,1440,55,330,0],[1300,1460,8,1200,0],[1050,1450,0,1600,0]
];
const shades = ['c1', 'c1', 'c1', 'c1', 'c1', 'c2'];
// Block sizes are coarser in Staten Island and Queens than in Brooklyn.
const coarseness = x => (x > 2270 ? 1.65 : x > 1500 ? 1.25 : 1.5);

let seed = 20173;
const rand = () => (seed = (seed * 16807) % 2147483647) / 2147483647;

// Cuts a convex polygon along the line a·x + b·y = c and returns the part below it.
function cut(poly, a, b, c) {
  const out = [];
  poly.forEach((p, i) => {
    const q = poly[(i + 1) % poly.length];
    const dp = a * p[0] + b * p[1] - c, dq = a * q[0] + b * q[1] - c;
    if (dp <= 0) out.push(p);
    if (dp * dq < 0) {
      const t = dp / (dp - dq);
      out.push([p[0] + t * (q[0] - p[0]), p[1] + t * (q[1] - p[1])]);
    }
  });
  return out;
}

const area = p => Math.abs(p.reduce((s, v, i) => {
  const w = p[(i + 1) % p.length];
  return s + v[0] * w[1] - w[0] * v[1];
}, 0)) / 2;

function divide(poly, angle, size, done) {
  if (poly.length < 3) return;
  if (area(poly) < size * (0.6 + rand() * 1.4)) { done(poly); return; }
  const ax = [Math.cos(angle), Math.sin(angle)], ay = [-ax[1], ax[0]];
  const span = n => {
    const v = poly.map(p => p[0] * n[0] + p[1] * n[1]);
    return [Math.min(...v), Math.max(...v)];
  };
  const sx = span(ax), sy = span(ay);
  const [n, s] = (sx[1] - sx[0]) > (sy[1] - sy[0]) * 1.6 ? [ax, sx] : [ay, sy];
  const tilt = (rand() - 0.5) * 0.18;
  const m = [n[0] * Math.cos(tilt) - n[1] * Math.sin(tilt), n[0] * Math.sin(tilt) + n[1] * Math.cos(tilt)];
  const cx = poly.reduce((t, p) => t + p[0], 0) / poly.length, cy = poly.reduce((t, p) => t + p[1], 0) / poly.length;
  const c = m[0] * cx + m[1] * cy + (s[1] - s[0]) * (rand() - 0.5) * 0.26;
  divide(cut(poly, m[0], m[1], c), angle, size, done);
  divide(cut(poly, -m[0], -m[1], -c), angle, size, done);
}

const NS = 'http://www.w3.org/2000/svg';
const add = (parent, cls, d) => {
  const el = document.createElementNS(NS, 'path');
  if (cls) el.setAttribute('class', cls);
  el.setAttribute('d', d);
  parent.appendChild(el);
};

// Gentle bend shared by all vertices, so that streets curve a little.
const bend = p => [
  p[0] + 4 * Math.sin(p[1] / 23 + p[0] / 61),
  p[1] + 4 * Math.sin(p[0] / 27 - p[1] / 53)
];

const byShade = { c0: '', c1: '', c2: '' };
for (const h of hoods) {
  let cell = [[820, 60], [2890, 60], [2890, 1510], [820, 1510]];
  for (const o of hoods) {
    if (o === h) continue;
    const a = o[0] - h[0], b = o[1] - h[1];
    cell = cut(cell, a, b, a * (o[0] + h[0]) / 2 + b * (o[1] + h[1]) / 2);
  }
  divide(cell, h[2] * Math.PI / 180, h[3] * coarseness(h[0]), block => {
    const shade = rand() < h[4] ? shades[Math.floor(rand() * shades.length)] : 'c0';
    byShade[shade] += 'M' + block.map(bend).map(p => p[0].toFixed(1) + ' ' + p[1].toFixed(1)).join('L') + 'z';
  });
}
const blocks = document.getElementById('blocks');
for (const k in byShade) add(blocks, k, byShade[k]);

// Marsh channels and ponds: [x, y, rx, ry, strokes, length].
const marshes = [
  [950,1385,22,32,70,7],[985,1420,28,34,60,7],[930,1365,16,14,35,6],[1000,1370,26,12,18,6],[940,1478,22,18,50,8],[1015,1340,10,20,14,6],[1000,1450,18,36,24,5],[1030,1400,14,20,14,6],[1020,1475,10,20,10,6],
  [2495,1438,30,32,110,9],[2672,1275,26,28,90,6],[2645,1250,22,14,40,6],[2585,1345,14,18,26,5],[2628,1322,14,10,16,7],[2605,1325,6,6,8,4],
  [2395,130,10,24,16,5],[2395,145,10,14,10,6],[2515,130,14,26,12,3],[2637,648,7,12,26,5],[2368,205,10,18,10,7],
  [2330,440,10,14,6,2],[2365,250,14,18,7,1],[2325,640,8,16,8,4],[2590,865,14,10,16,2],[2670,770,10,20,9,2],[2725,765,8,14,7,2],
  [2290,1470,20,12,20,6],[2335,1440,14,36,18,6],[2450,1478,10,6,10,5],[2250,1420,14,10,10,6],[2180,1415,14,22,20,4],
  [2345,1240,9,18,14,5],[2250,1480,16,14,14,6],[2310,1475,14,14,10,6],[2692,1325,10,12,12,6],[1200,1490,14,8,10,4],[1385,1465,8,16,12,6],[2085,1395,8,10,6,3],[2100,1470,8,18,6,3]
];
let d = '';
for (const [x, y, rx, ry, n, len] of marshes) {
  for (let i = 0; i < n; i++) {
    const t = rand() * 6.283, r = Math.sqrt(rand());
    let dir = rand() * 6.283;
    d += `M${(x + Math.cos(t) * r * rx).toFixed(1)} ${(y + Math.sin(t) * r * ry).toFixed(1)}`;
    for (let k = 0; k < 3; k++) {
      dir += (rand() - 0.5) * 2.4;
      d += `l${(Math.cos(dir) * len / 3).toFixed(1)} ${(Math.sin(dir) * len / 3).toFixed(1)}`;
    }
  }
}
add(document.getElementById('marsh'), '', d);
// A line of piers beside the south-east creek.
add(document.getElementById('marsh'), '', 'M2740 1115l-3 6M2733 1130l-5 7M2722 1143l-6 8M2712 1158l-5 7M2702 1172l-6 8M2692 1186l-6 10M2682 1200l-5 8M2672 1216l-4 8');
```
